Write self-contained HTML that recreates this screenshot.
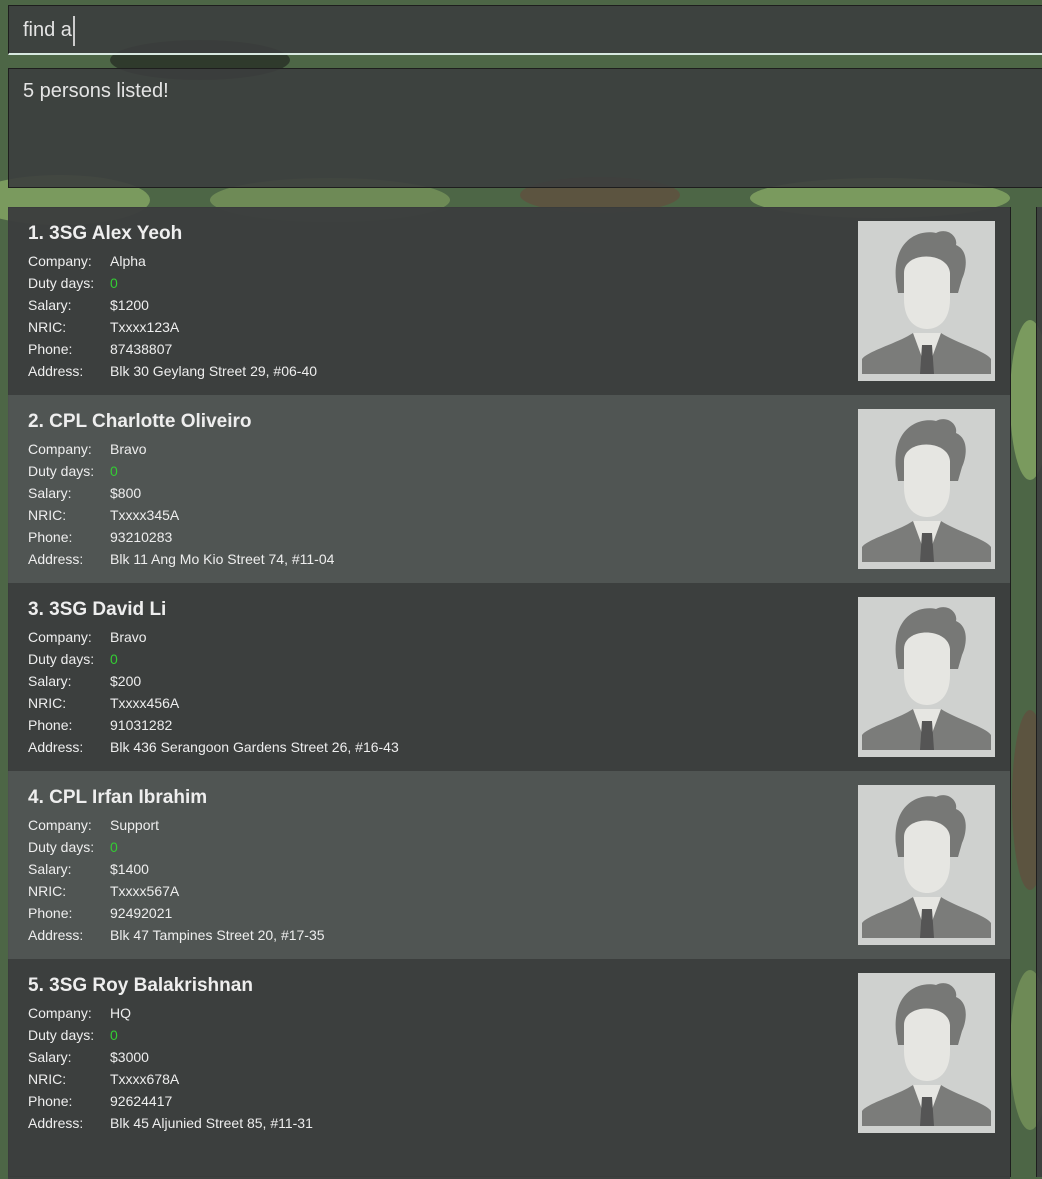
<!DOCTYPE html>
<html><head><meta charset="utf-8"><style>
*{margin:0;padding:0;box-sizing:border-box}
body{width:1042px;height:1172px;overflow:hidden;position:relative;background:#4d6646;font-family:"Liberation Sans",sans-serif;color:#fff}
#bg{position:absolute;left:0;top:0}
.cmd{position:absolute;left:8px;top:5px;width:1040px;height:50px;background:rgba(60,62,62,.9);border:1px solid #1e1e1e;border-bottom:2px solid #d8e8e0}
.cmd span{position:absolute;left:14px;top:13px;font-size:20px;color:#e4e4e4}
.cmd i{position:absolute;left:64px;top:10px;width:2px;height:30px;background:#ccc}
.res{position:absolute;left:8px;top:68px;width:1040px;height:120px;background:rgba(60,62,62,.9);border:1px solid #1e1e1e}
.res span{position:absolute;left:14px;top:11px;font-size:20px;color:#e4e4e4}
.list{position:absolute;left:8px;top:207px;width:1003px;height:970px;border:1px solid #1e1e1e;background:rgba(60,62,62,.6)}
.side{position:absolute;left:1036px;top:207px;width:10px;height:970px;border-left:1px solid #1e1e1e;background:rgba(60,62,62,.9)}
.card{position:absolute;left:-1px;width:1002px;height:188px}
.odd{background:rgba(60,62,62,.93)}
.even{background:rgba(82,86,85,.93)}
.t{position:absolute;left:20px;top:16px;font-size:19px;font-weight:bold;color:#eee}
.r{position:absolute;left:20px;font-size:14px;color:#eee}
.r b{font-weight:normal;position:absolute;left:82px;white-space:nowrap}
.g{color:#3c3}
.ph{position:absolute;left:850px;top:14px;width:137px;height:160px;background:#cfd1cf}
</style></head><body>
<svg id="bg" width="1042" height="1172">
<rect width="1042" height="1172" fill="#4d6646"/>
<g>
<ellipse cx="60" cy="200" rx="90" ry="25" fill="#7a9a5e"/>
<ellipse cx="330" cy="200" rx="120" ry="22" fill="#6e8a56"/>
<ellipse cx="600" cy="195" rx="80" ry="18" fill="#5c5440"/>
<ellipse cx="880" cy="198" rx="130" ry="20" fill="#7a9a5e"/>
<ellipse cx="200" cy="60" rx="90" ry="20" fill="#2f3a2c"/>
<ellipse cx="1030" cy="400" rx="20" ry="80" fill="#7a9a5e"/>
<ellipse cx="1030" cy="800" rx="18" ry="90" fill="#5c5440"/>
<ellipse cx="1030" cy="1050" rx="20" ry="80" fill="#6e8a56"/>
</g>
</svg>
<div class="cmd"><span>find a</span><i></i></div>
<div class="res"><span>5 persons listed!</span></div>
<div class="side"></div>
<div class="list">
<div class="card odd" style="top:-1px"><div class="t">1. 3SG Alex Yeoh</div>
<div class="r" style="top:46px">Company:<b>Alpha</b></div><div class="r" style="top:68px">Duty days:<b class="g">0</b></div><div class="r" style="top:90px">Salary:<b>$1200</b></div><div class="r" style="top:112px">NRIC:<b>Txxxx123A</b></div><div class="r" style="top:134px">Phone:<b>87438807</b></div><div class="r" style="top:156px">Address:<b>Blk 30 Geylang Street 29, #06-40</b></div>
<svg class="ph" viewBox="0 0 137 160"><rect width="137" height="160" fill="#cfd1cf"/><path d="M38 60 C34 20 60 8 78 12 C90 6 100 16 98 24 C112 30 108 50 104 58 L100 72 L40 72Z" fill="#777876"/><path d="M46 52 C46 30 90 30 92 52 L92 78 C92 100 80 108 69 108 C58 108 46 100 46 78Z" fill="#e6e6e2"/><path d="M4 153 L4 138 C10 130 40 122 55 112 L83 112 C98 122 128 130 133 138 L133 153Z" fill="#7b7c7a"/><path d="M55 112 L69 150 L83 112Z" fill="#e6e6e2"/><path d="M64 124 L74 124 L76 153 L62 153Z" fill="#555"/></svg></div>
<div class="card even" style="top:187px"><div class="t">2. CPL Charlotte Oliveiro</div>
<div class="r" style="top:46px">Company:<b>Bravo</b></div><div class="r" style="top:68px">Duty days:<b class="g">0</b></div><div class="r" style="top:90px">Salary:<b>$800</b></div><div class="r" style="top:112px">NRIC:<b>Txxxx345A</b></div><div class="r" style="top:134px">Phone:<b>93210283</b></div><div class="r" style="top:156px">Address:<b>Blk 11 Ang Mo Kio Street 74, #11-04</b></div>
<svg class="ph" viewBox="0 0 137 160"><rect width="137" height="160" fill="#cfd1cf"/><path d="M38 60 C34 20 60 8 78 12 C90 6 100 16 98 24 C112 30 108 50 104 58 L100 72 L40 72Z" fill="#777876"/><path d="M46 52 C46 30 90 30 92 52 L92 78 C92 100 80 108 69 108 C58 108 46 100 46 78Z" fill="#e6e6e2"/><path d="M4 153 L4 138 C10 130 40 122 55 112 L83 112 C98 122 128 130 133 138 L133 153Z" fill="#7b7c7a"/><path d="M55 112 L69 150 L83 112Z" fill="#e6e6e2"/><path d="M64 124 L74 124 L76 153 L62 153Z" fill="#555"/></svg></div>
<div class="card odd" style="top:375px"><div class="t">3. 3SG David Li</div>
<div class="r" style="top:46px">Company:<b>Bravo</b></div><div class="r" style="top:68px">Duty days:<b class="g">0</b></div><div class="r" style="top:90px">Salary:<b>$200</b></div><div class="r" style="top:112px">NRIC:<b>Txxxx456A</b></div><div class="r" style="top:134px">Phone:<b>91031282</b></div><div class="r" style="top:156px">Address:<b>Blk 436 Serangoon Gardens Street 26, #16-43</b></div>
<svg class="ph" viewBox="0 0 137 160"><rect width="137" height="160" fill="#cfd1cf"/><path d="M38 60 C34 20 60 8 78 12 C90 6 100 16 98 24 C112 30 108 50 104 58 L100 72 L40 72Z" fill="#777876"/><path d="M46 52 C46 30 90 30 92 52 L92 78 C92 100 80 108 69 108 C58 108 46 100 46 78Z" fill="#e6e6e2"/><path d="M4 153 L4 138 C10 130 40 122 55 112 L83 112 C98 122 128 130 133 138 L133 153Z" fill="#7b7c7a"/><path d="M55 112 L69 150 L83 112Z" fill="#e6e6e2"/><path d="M64 124 L74 124 L76 153 L62 153Z" fill="#555"/></svg></div>
<div class="card even" style="top:563px"><div class="t">4. CPL Irfan Ibrahim</div>
<div class="r" style="top:46px">Company:<b>Support</b></div><div class="r" style="top:68px">Duty days:<b class="g">0</b></div><div class="r" style="top:90px">Salary:<b>$1400</b></div><div class="r" style="top:112px">NRIC:<b>Txxxx567A</b></div><div class="r" style="top:134px">Phone:<b>92492021</b></div><div class="r" style="top:156px">Address:<b>Blk 47 Tampines Street 20, #17-35</b></div>
<svg class="ph" viewBox="0 0 137 160"><rect width="137" height="160" fill="#cfd1cf"/><path d="M38 60 C34 20 60 8 78 12 C90 6 100 16 98 24 C112 30 108 50 104 58 L100 72 L40 72Z" fill="#777876"/><path d="M46 52 C46 30 90 30 92 52 L92 78 C92 100 80 108 69 108 C58 108 46 100 46 78Z" fill="#e6e6e2"/><path d="M4 153 L4 138 C10 130 40 122 55 112 L83 112 C98 122 128 130 133 138 L133 153Z" fill="#7b7c7a"/><path d="M55 112 L69 150 L83 112Z" fill="#e6e6e2"/><path d="M64 124 L74 124 L76 153 L62 153Z" fill="#555"/></svg></div>
<div class="card odd" style="top:751px;height:220px"><div class="t">5. 3SG Roy Balakrishnan</div>
<div class="r" style="top:46px">Company:<b>HQ</b></div><div class="r" style="top:68px">Duty days:<b class="g">0</b></div><div class="r" style="top:90px">Salary:<b>$3000</b></div><div class="r" style="top:112px">NRIC:<b>Txxxx678A</b></div><div class="r" style="top:134px">Phone:<b>92624417</b></div><div class="r" style="top:156px">Address:<b>Blk 45 Aljunied Street 85, #11-31</b></div>
<svg class="ph" viewBox="0 0 137 160"><rect width="137" height="160" fill="#cfd1cf"/><path d="M38 60 C34 20 60 8 78 12 C90 6 100 16 98 24 C112 30 108 50 104 58 L100 72 L40 72Z" fill="#777876"/><path d="M46 52 C46 30 90 30 92 52 L92 78 C92 100 80 108 69 108 C58 108 46 100 46 78Z" fill="#e6e6e2"/><path d="M4 153 L4 138 C10 130 40 122 55 112 L83 112 C98 122 128 130 133 138 L133 153Z" fill="#7b7c7a"/><path d="M55 112 L69 150 L83 112Z" fill="#e6e6e2"/><path d="M64 124 L74 124 L76 153 L62 153Z" fill="#555"/></svg></div>
</div>
</body></html>
